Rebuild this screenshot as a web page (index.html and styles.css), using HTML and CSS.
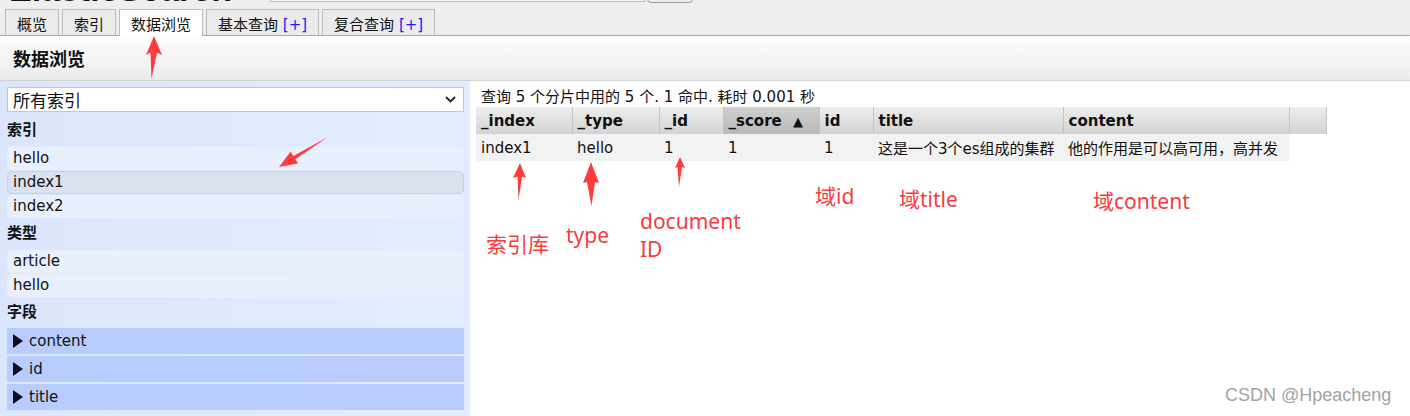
FILE: index.html
```html
<!DOCTYPE html>
<html lang="zh">
<head>
<meta charset="utf-8">
<title>数据浏览</title>
<link rel="stylesheet" href="styles.css">
</head>
<body>
<div class="masthead">
  <div class="brand">ElasticSearch</div>
  <div class="search-box"></div>
  <div class="search-btn"></div>
</div>
<div class="tabs">
  <div class="tab">概览</div>
  <div class="tab">索引</div>
  <div class="tab active">数据浏览</div>
  <div class="tab">基本查询 <span class="plus">[+]</span></div>
  <div class="tab">复合查询 <span class="plus">[+]</span></div>
</div>
<div class="pagehead">数据浏览</div>
<div class="main">
  <div class="sidebar">
    <div class="select"><span>所有索引</span>
      <svg width="11" height="7" viewBox="0 0 11 7"><path d="M1 1 L5.5 5.5 L10 1" fill="none" stroke="#222" stroke-width="1.8"/></svg>
    </div>
    <div class="sec">索引</div>
    <div class="item">hello</div>
    <div class="item sel">index1</div>
    <div class="item">index2</div>
    <div class="sec">类型</div>
    <div class="item">article</div>
    <div class="item">hello</div>
    <div class="sec">字段</div>
    <div class="fields">
      <div class="field"><span class="tri"></span>content</div>
      <div class="field"><span class="tri"></span>id</div>
      <div class="field"><span class="tri"></span>title</div>
    </div>
  </div>
  <div class="content">
    <div class="summary">查询 5 个分片中用的 5 个. 1 命中. 耗时 0.001 秒</div>
    <table class="results">
      <colgroup>
        <col class="c96"><col class="c87"><col class="c64"><col class="c96"><col class="c54"><col class="c190"><col class="c226"><col class="c37">
      </colgroup>
      <thead>
        <tr><th>_index</th><th>_type</th><th>_id</th><th class="sorted">_score <span class="arrow">▲</span></th><th>id</th><th>title</th><th>content</th><th></th></tr>
      </thead>
      <tbody>
        <tr><td>index1</td><td>hello</td><td>1</td><td>1</td><td>1</td><td>这是一个3个es组成的集群</td><td>他的作用是可以高可用，高并发</td></tr>
      </tbody>
    </table>
  </div>
</div>

<svg class="marks" width="1410" height="416" viewBox="0 0 1410 416">
  <g fill="#ff3b3b">
    <polygon points="154,36 162,55 157,52.5 151.5,79 150.5,52.5 146,55"/>
    <polygon points="279,167 298,163.5 295.3,159.3 328,137 293.3,155.9 290.7,151.6"/>
    <polygon points="520,163 526,178 522,176.5 518.5,200 517.5,176.5 513,178"/>
    <polygon points="591,162 599,183 595,182 591.5,206 587,182 583,183"/>
    <polygon points="680,157 685,168 682,167 679,187 677.5,167 675,168"/>
  </g>
</svg>
<div class="note n1">索引库</div>
<div class="note n2">type</div>
<div class="note n3">document<br>ID</div>
<div class="note n4">域id</div>
<div class="note n5">域title</div>
<div class="note n6">域content</div>
<div class="watermark">CSDN @Hpeacheng</div>
</body>
</html>
```

FILE: styles.css
```css
html, body {
  margin: 0;
  padding: 0;
}
body {
  width: 1410px;
  height: 416px;
  overflow: hidden;
  position: relative;
  display: flex;
  flex-direction: column;
  background: #fff;
  color: #111;
  font-family: "DejaVu Sans", "Noto Sans CJK SC", sans-serif;
  font-size: 15px;
}

/* cropped top bar */
.masthead {
  height: 9px;
  flex: none;
  background: #eeeeee;
  display: flex;
  align-items: flex-end;
  overflow: hidden;
}
.brand {
  font: bold 34px/34px "Liberation Sans", sans-serif;
  color: #111;
  width: 270px;
  padding-left: 9px;
  margin-bottom: 3px;
  box-sizing: border-box;
}
.search-box {
  width: 375px;
  height: 22px;
  box-sizing: border-box;
  border: 1px solid #b8b8b8;
  background: #fafafa;
  margin-bottom: 7px;
}
.search-btn {
  width: 46px;
  height: 22px;
  margin-left: 2px;
  box-sizing: border-box;
  border: 1px solid #9a9a9a;
  border-radius: 4px;
  background: #ececec;
  margin-bottom: 6px;
}

/* tabs */
.tabs {
  flex: none;
  height: 26px;
  display: flex;
  align-items: flex-start;
  gap: 3px;
  padding-left: 5px;
  background: #eeeeee;
  border-bottom: 1px solid #a9a9a9;
}
.tab {
  height: 26px;
  box-sizing: border-box;
  border: 1px solid #bdbdbd;
  border-bottom: none;
  background: #ebebeb;
  padding: 5px 11px 0;
  line-height: 20px;
  white-space: nowrap;
}
.tab.active {
  height: 27px;
  margin-bottom: -1px;
  background: #fff;
}
.plus {
  color: #1a1aff;
}

.pagehead {
  flex: none;
  height: 45px;
  box-sizing: border-box;
  border-bottom: 1px solid #d2d2d2;
  background: linear-gradient(#fdfdfd, #ebebeb);
  padding-left: 13px;
  display: flex;
  align-items: center;
  font-weight: bold;
  font-size: 18px;
}

.main {
  flex: 1;
  display: flex;
  min-height: 0;
}

/* sidebar */
.sidebar {
  width: 470px;
  flex: none;
  box-sizing: border-box;
  padding: 6px 6px 0 7px;
  background: linear-gradient(to right, #dbe6fc, #e4edfe);
}
.select {
  height: 25px;
  box-sizing: border-box;
  border: 1px solid #c6c6c6;
  background: #fff;
  display: flex;
  align-items: center;
  justify-content: space-between;
  padding: 0 7px 0 5px;
  font-size: 17px;
  font-family: "Noto Sans CJK SC", sans-serif;
  margin-bottom: 4px;
}
.sec {
  font-weight: bold;
  line-height: 20px;
  padding: 4px 0 7px;
}
.item {
  height: 23px;
  box-sizing: border-box;
  line-height: 23px;
  padding-left: 6px;
  background: #e8f0fe;
  border-radius: 5px;
  margin-bottom: 1px;
}
.item.sel {
  background: #d9e2ee;
  border: 1px solid #c9d2de;
  line-height: 21px;
  padding-left: 5px;
}
.fields {
  margin-top: -1px;
}
.field {
  height: 26px;
  box-sizing: border-box;
  background: #b8cdfd;
  display: flex;
  align-items: center;
  gap: 6px;
  padding-left: 6px;
  margin-bottom: 2px;
}
.tri {
  width: 0;
  height: 0;
  border-left: 10px solid #120c22;
  border-top: 7px solid transparent;
  border-bottom: 7px solid transparent;
}

/* results */
.content {
  flex: 1;
  padding: 6px 0 0 6px;
}
.summary {
  line-height: 20px;
  padding-left: 5px;
}
.results {
  border-collapse: collapse;
  border-spacing: 0;
  table-layout: fixed;
  width: 850px;
}
.c96 { width: 96px; }
.c87 { width: 87px; }
.c64 { width: 64px; }
.c54 { width: 54px; }
.c190 { width: 190px; }
.c226 { width: 226px; }
.c37 { width: 37px; }
.results th {
  height: 27px;
  padding: 0 5px;
  text-align: left;
  font-weight: bold;
  background: linear-gradient(#ededed, #d3d3d3);
  border-left: 1px solid #f6f6f6;
  border-right: 1px solid #c4c4c4;
  white-space: nowrap;
}
.results th:first-child {
  border-left: none;
}
.results th.sorted {
  background: linear-gradient(#cfcfcf, #b9b9b9);
}
.arrow {
  font-size: 13px;
  margin-left: 6px;
}
.results td {
  height: 27px;
  padding: 0 6px 0 5px;
  background: #f2f2f2;
  white-space: nowrap;
  overflow: hidden;
}

/* annotations */
.marks {
  position: absolute;
  left: 0;
  top: 0;
  pointer-events: none;
}
.note {
  position: absolute;
  color: #f63c3c;
  font-family: "Noto Sans", "Noto Sans CJK SC", sans-serif;
  font-size: 21px;
  line-height: 24px;
  white-space: nowrap;
}
.n1 { left: 486px; top: 232px; }
.n2 { left: 566px; top: 223px; }
.n3 { left: 640px; top: 207px; line-height: 28px; }
.n4 { left: 815px; top: 184px; }
.n5 { left: 899px; top: 187px; }
.n6 { left: 1093px; top: 189px; }
.watermark {
  position: absolute;
  left: 1225px;
  top: 385px;
  font: 18px/20px "Liberation Sans", sans-serif;
  color: #a3a3a3;
}
```
